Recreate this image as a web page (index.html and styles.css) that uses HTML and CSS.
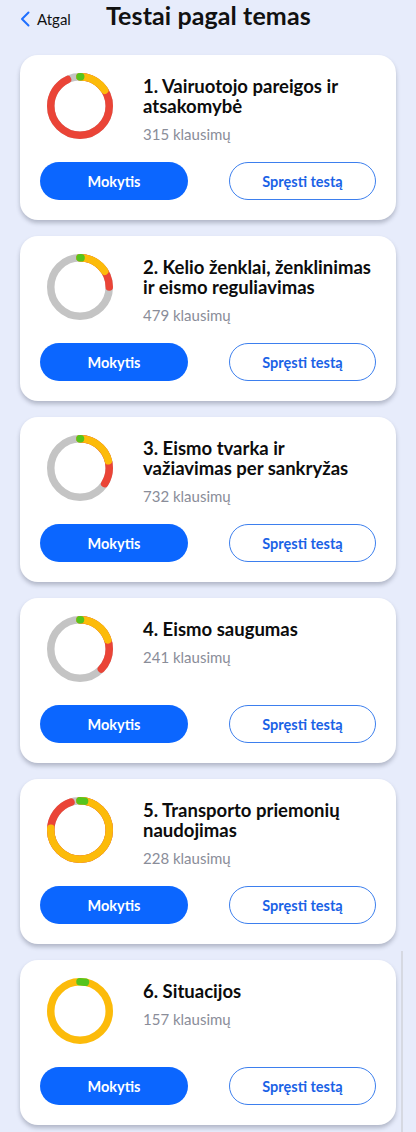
FILE: index.html
```html
<!DOCTYPE html>
<html lang="lt">
<head>
<meta charset="utf-8">
<title>Testai pagal temas</title>
<link rel="stylesheet" href="styles.css">
</head>
<body>
<header class="topbar">
  <a class="back" href="#">
    <svg class="back-icon" viewBox="0 0 10 16" width="10" height="16"><path d="M8.5 1.5 L2 8 L8.5 14.5" fill="none" stroke="#1f6fff" stroke-width="2" stroke-linecap="round" stroke-linejoin="round"/></svg>
    <span>Atgal</span>
  </a>
  <h1 class="title">Testai pagal temas</h1>
</header>

<main class="list">
  <section class="card">
    <div class="card-top">
      <svg class="donut" viewBox="0 0 66 66" width="66" height="66"><g transform="rotate(-90 33 33)">
        <circle class="ring gray" cx="33" cy="33" r="29.25" pathLength="100"/>
        <circle class="ring red" cx="33" cy="33" r="29.25" pathLength="100" stroke-dasharray="93 100"/>
        <circle class="ring yellow" cx="33" cy="33" r="29.25" pathLength="100" stroke-dasharray="16 100"/>
        <circle class="ring green" cx="33" cy="33" r="29.25" pathLength="100" stroke-dasharray="0.4 100"/>
      </g></svg>
      <div class="info">
        <h2 class="name">1. Vairuotojo pareigos ir<br>atsakomybė</h2>
        <p class="count">315 klausimų</p>
      </div>
    </div>
    <div class="actions"><a class="btn primary" href="#">Mokytis</a><a class="btn outline" href="#">Spręsti testą</a></div>
  </section>

  <section class="card">
    <div class="card-top">
      <svg class="donut" viewBox="0 0 66 66" width="66" height="66"><g transform="rotate(-90 33 33)">
        <circle class="ring gray" cx="33" cy="33" r="29.25" pathLength="100"/>
        <circle class="ring red" cx="33" cy="33" r="29.25" pathLength="100" stroke-dasharray="25 100"/>
        <circle class="ring yellow" cx="33" cy="33" r="29.25" pathLength="100" stroke-dasharray="16 100"/>
        <circle class="ring green" cx="33" cy="33" r="29.25" pathLength="100" stroke-dasharray="0.6 100"/>
      </g></svg>
      <div class="info">
        <h2 class="name">2. Kelio ženklai, ženklinimas<br>ir eismo reguliavimas</h2>
        <p class="count">479 klausimų</p>
      </div>
    </div>
    <div class="actions"><a class="btn primary" href="#">Mokytis</a><a class="btn outline" href="#">Spręsti testą</a></div>
  </section>

  <section class="card">
    <div class="card-top">
      <svg class="donut" viewBox="0 0 66 66" width="66" height="66"><g transform="rotate(-90 33 33)">
        <circle class="ring gray" cx="33" cy="33" r="29.25" pathLength="100"/>
        <circle class="ring red" cx="33" cy="33" r="29.25" pathLength="100" stroke-dasharray="34 100"/>
        <circle class="ring yellow" cx="33" cy="33" r="29.25" pathLength="100" stroke-dasharray="21 100"/>
        <circle class="ring green" cx="33" cy="33" r="29.25" pathLength="100" stroke-dasharray="0.3 100"/>
      </g></svg>
      <div class="info">
        <h2 class="name">3. Eismo tvarka ir<br>važiavimas per sankryžas</h2>
        <p class="count">732 klausimų</p>
      </div>
    </div>
    <div class="actions"><a class="btn primary" href="#">Mokytis</a><a class="btn outline" href="#">Spręsti testą</a></div>
  </section>

  <section class="card">
    <div class="card-top">
      <svg class="donut" viewBox="0 0 66 66" width="66" height="66"><g transform="rotate(-90 33 33)">
        <circle class="ring gray" cx="33" cy="33" r="29.25" pathLength="100"/>
        <circle class="ring red" cx="33" cy="33" r="29.25" pathLength="100" stroke-dasharray="37 100"/>
        <circle class="ring yellow" cx="33" cy="33" r="29.25" pathLength="100" stroke-dasharray="20 100"/>
        <circle class="ring green" cx="33" cy="33" r="29.25" pathLength="100" stroke-dasharray="0.3 100"/>
      </g></svg>
      <div class="info">
        <h2 class="name">4. Eismo saugumas</h2>
        <p class="count">241 klausimų</p>
      </div>
    </div>
    <div class="actions"><a class="btn primary" href="#">Mokytis</a><a class="btn outline" href="#">Spręsti testą</a></div>
  </section>

  <section class="card">
    <div class="card-top">
      <svg class="donut" viewBox="0 0 66 66" width="66" height="66"><g transform="rotate(-90 33 33)">
        <circle class="ring gray" cx="33" cy="33" r="29.25" pathLength="100"/>
        <circle class="ring red" cx="33" cy="33" r="29.25" pathLength="100" stroke-dasharray="95 100"/>
        <circle class="ring yellow" cx="33" cy="33" r="29.25" pathLength="100" stroke-dasharray="76 100"/>
        <circle class="ring green" cx="33" cy="33" r="29.25" pathLength="100" stroke-dasharray="2.5 100"/>
      </g></svg>
      <div class="info">
        <h2 class="name">5. Transporto priemonių<br>naudojimas</h2>
        <p class="count">228 klausimų</p>
      </div>
    </div>
    <div class="actions"><a class="btn primary" href="#">Mokytis</a><a class="btn outline" href="#">Spręsti testą</a></div>
  </section>

  <section class="card">
    <div class="card-top">
      <svg class="donut" viewBox="0 0 66 66" width="66" height="66"><g transform="rotate(-90 33 33)">
        <circle class="ring yellow full" cx="33" cy="33" r="29.25" pathLength="100"/>
        <circle class="ring green" cx="33" cy="33" r="29.25" pathLength="100" stroke-dasharray="3 100"/>
      </g></svg>
      <div class="info">
        <h2 class="name">6. Situacijos</h2>
        <p class="count">157 klausimų</p>
      </div>
    </div>
    <div class="actions"><a class="btn primary" href="#">Mokytis</a><a class="btn outline" href="#">Spręsti testą</a></div>
  </section>
</main>
<div class="scroll-indicator"></div>
</body>
</html>
```

FILE: styles.css
```css
* { box-sizing: border-box; }
html, body { margin: 0; padding: 0; }
body {
  background: #e7ecfb;
  font-family: Lato, "Noto Sans", "Liberation Sans", sans-serif;
  color: #111;
  width: 416px;
  height: 1132px;
  overflow: hidden;
  position: relative;
}
.topbar {
  display: flex;
  align-items: flex-start;
  height: 31px;
  padding-left: 20px;
}
.back {
  width: 86px;
  display: flex;
  align-items: center;
  gap: 7px;
  margin-top: 11px;
  text-decoration: none;
  color: #111;
  font-size: 15px;
  line-height: 16px;
}
.back-icon { display: block; flex: none; }
.title {
  margin: 0;
  font-size: 25px;
  line-height: 30px;
  font-weight: 700;
  letter-spacing: 0.1px;
}
.list {
  display: flex;
  flex-direction: column;
  gap: 16px;
  padding: 24px 20px 0;
}
.card {
  height: 165px;
  background: #fff;
  border-radius: 18px;
  box-shadow: 0 3px 4px rgba(40, 45, 70, 0.28);
  padding: 18px 20px 20px;
  display: flex;
  flex-direction: column;
}
.card-top {
  display: flex;
  align-items: flex-start;
  margin-right: -16px;
}
.donut {
  display: block;
  flex: none;
  margin-left: 7px;
  margin-right: 30px;
}
.ring {
  fill: none;
  stroke-width: 7.5;
  stroke-linecap: round;
}
.ring.gray { stroke: #c4c4c4; }
.ring.red { stroke: #ea4437; }
.ring.yellow { stroke: #fcbb0a; }
.ring.green { stroke: #55c41d; }
.ring.full { stroke-linecap: butt; }
.info { margin-top: 3px; }
.name {
  margin: 0;
  font-size: 18.5px;
  line-height: 20px;
  font-weight: 700;
  color: #0c0c0c;
  white-space: nowrap;
}
.count {
  margin: 8px 0 0;
  font-size: 15px;
  line-height: 20px;
  color: #8a8d99;
}
.actions {
  margin-top: auto;
  display: flex;
  justify-content: space-between;
}
.btn {
  width: 148px;
  height: 38px;
  border-radius: 19px;
  display: flex;
  align-items: center;
  justify-content: center;
  font-size: 14.5px;
  font-weight: 700;
  text-decoration: none;
}
.btn.primary {
  background: #0b66ff;
  color: #fff;
}
.btn.outline {
  width: 147px;
  border: 1px solid #3d7fee;
  color: #1a62e6;
  background: #fff;
}
.scroll-indicator {
  position: absolute;
  left: 401px;
  top: 951px;
  width: 2px;
  height: 181px;
  background: #d6d9e2;
}
```
